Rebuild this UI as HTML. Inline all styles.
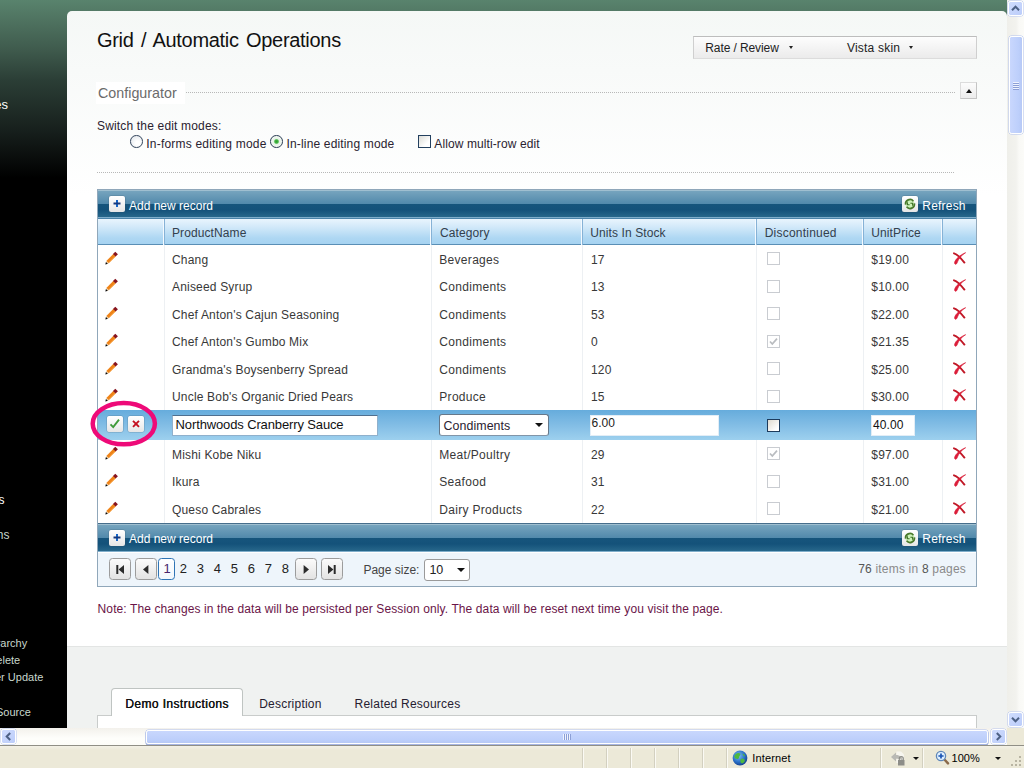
<!DOCTYPE html>
<html><head><meta charset="utf-8"><title>Grid / Automatic Operations</title>
<style>
*{box-sizing:border-box}
html,body{margin:0;padding:0}
body{width:1024px;height:768px;overflow:hidden;position:relative;background:#000;font-family:"Liberation Sans",sans-serif;font-size:12px;color:#333}
.abs{position:absolute}
#bg{left:0;top:0;width:1007px;height:728px;background:linear-gradient(to bottom,#59836d 0,#405c4e 48px,#2b3e36 80px,#18211e 128px,#000 178px)}
#panel{left:67px;top:11px;width:940px;height:717px;border-radius:5px 5px 0 0;background:linear-gradient(to bottom,#f5f8f6 0,#f8faf9 60px,#ffffff 185px)}
#lower{left:67px;top:646px;width:940px;height:82px;background:#f0f2f1;border-top:1px solid #e3e5e4}
#menu{left:693px;top:36px;width:284px;height:23px;border:1px solid #cfcfcf;border-top-color:#bdbdbd;border-bottom-color:#dcdcdc;background:linear-gradient(#fdfdfd,#ebebeb)}
.tri{position:absolute;width:0;height:0;border-left:2px solid transparent;border-right:2px solid transparent;border-top:3px solid #222}
.dot{position:absolute;height:1px;background-image:linear-gradient(to right,#b8b8b8 1px,transparent 1px);background-size:2px 1px}
#grid{left:97px;top:189px;width:880px;height:398px;border:1px solid #90a7ba;background:#fff}
.cmd{position:absolute;left:0;width:878px;height:28px;background:linear-gradient(to bottom,#9fbfd0 0,#9fbfd0 1px,#76a4be 1px,#5189ab 14px,#16557c 14px,#14527a 20px,#27678b 27px,#80aecb 27px,#80aecb 28px)}
.hdr{position:absolute;left:0;top:29px;width:878px;height:26px;background:linear-gradient(to bottom,#e9f5fd 0,#d2e9f9 8px,#aed7f3 19px,#a6d3f1 100%);border-bottom:1px solid #5a8fb6}
.hs{position:absolute;top:29px;height:26px;width:2px;border-left:1px solid #f4faff;border-right:1px solid #86b2d6}
.cs{position:absolute;top:55px;width:1px;background:#edf0f3}
.btn16{position:absolute;width:16px;height:16px;border-radius:2px;background:linear-gradient(#ffffff,#f1f1f1 60%,#e6e6e6);box-shadow:0 0 0 0.5px rgba(60,80,100,.35)}
.edit{position:absolute;left:0;width:878px;top:220px;height:30px;background:linear-gradient(to bottom,#66acdc 0,#82bde5 50%,#9dd0ee 100%)}
.tb{position:absolute;background:#fff;height:20px;top:226px;border:1px solid #dfe9f1;font-size:12px}
.cb{position:absolute;width:13px;height:13px;border:1px solid #c9ccd1;background:#fff}
.pb{position:absolute;top:369px;width:22px;height:22px;border:1px solid #9c9c9c;border-radius:3px;background:linear-gradient(#fafafa,#e2e2e2)}
#status{left:0;top:745px;width:1024px;height:23px;background:linear-gradient(#f3f1e6 0,#ece9d8 4px,#ece9d8 100%);border-top:1px solid #908f86}
.sep{position:absolute;top:748px;height:20px;width:2px;border-left:1px solid #d3d0c0;border-right:1px solid #fbfaf4}
</style></head><body>

<div class="abs" id="bg"></div>
<span style="position:absolute;top:97.35px;font-size:13px;line-height:15px;color:#fff;white-space:nowrap;right:1016.00px;">es</span>
<span style="position:absolute;top:493.19px;font-size:12px;line-height:14px;color:#fff;white-space:nowrap;right:1019.50px;">s</span>
<span style="position:absolute;top:528.19px;font-size:12px;line-height:14px;color:#c9d8cd;white-space:nowrap;right:1014.50px;">ns</span>
<span style="position:absolute;top:637.04px;font-size:11px;line-height:13px;color:#c8d7cd;white-space:nowrap;right:996.80px;">Hierarchy</span>
<span style="position:absolute;top:653.64px;font-size:11px;line-height:13px;color:#c8d7cd;white-space:nowrap;right:1003.80px;">Delete</span>
<span style="position:absolute;top:671.04px;font-size:11px;line-height:13px;color:#c8d7cd;white-space:nowrap;right:980.70px;">After Update</span>
<span style="position:absolute;top:706.04px;font-size:11px;line-height:13px;color:#c8d7cd;white-space:nowrap;right:993.20px;">Source</span>
<div class="abs" id="panel"></div>
<div class="abs" id="lower"></div>
<span style="position:absolute;top:29.02px;font-size:20px;line-height:22px;color:#111;white-space:nowrap;left:97.00px;letter-spacing:-0.3px;word-spacing:2.1px;">Grid / Automatic Operations</span>
<div class="abs" id="menu"></div>
<span style="position:absolute;top:40.59px;font-size:12px;line-height:14px;color:#222;white-space:nowrap;left:705.30px;letter-spacing:-0.1px;">Rate / Review</span>
<i class="tri" style="left:788.5px;top:45.5px"></i>
<span style="position:absolute;top:40.59px;font-size:12px;line-height:14px;color:#222;white-space:nowrap;left:847.00px;letter-spacing:0.2px;">Vista skin</span>
<i class="tri" style="left:908.5px;top:45.5px"></i>
<div class="dot" style="left:186px;top:92px;width:770px"></div>
<div class="abs" style="left:96px;top:82px;width:89px;height:22px;background:#fff"></div>
<span style="position:absolute;top:85.45px;font-size:14.3px;line-height:16.3px;color:#6b6b6b;white-space:nowrap;left:98.00px;">Configurator</span>
<div class="abs" style="left:960px;top:82px;width:17px;height:17px;border:1px solid #c4c4c4;border-top-color:#dcdcdc;border-left-color:#dcdcdc;background:linear-gradient(#fcfcfc,#ececec)"><i style="position:absolute;left:4.5px;top:5.5px;width:0;height:0;border-left:3px solid transparent;border-right:3px solid transparent;border-bottom:4px solid #111"></i></div>
<span style="position:absolute;top:118.99px;font-size:12px;line-height:14px;color:#2a2230;white-space:nowrap;left:97.00px;letter-spacing:0.17px;">Switch the edit modes:</span>
<div class="abs" style="left:130px;top:135px;width:12.5px;height:12.5px;border-radius:50%;border:1px solid #35475e;background:radial-gradient(circle at 60% 65%,#fff 20%,#dde3e9 100%)"></div>
<span style="position:absolute;top:136.99px;font-size:12px;line-height:14px;color:#2a2230;white-space:nowrap;left:146.30px;letter-spacing:0.2px;">In-forms editing mode</span>
<div class="abs" style="left:270px;top:135px;width:12.5px;height:12.5px;border-radius:50%;border:1px solid #2c3e55;background:radial-gradient(circle at 50% 50%,#2f9f2f 0,#43b543 1.7px,#e6f2e6 2.9px,#fff 100%)"></div>
<span style="position:absolute;top:136.99px;font-size:12px;line-height:14px;color:#2a2230;white-space:nowrap;left:286.50px;letter-spacing:0.16px;">In-line editing mode</span>
<div class="abs" style="left:418px;top:135px;width:13px;height:13px;border:1px solid #23405f;background:linear-gradient(135deg,#dcdcd6,#fff 70%)"></div>
<span style="position:absolute;top:136.99px;font-size:12px;line-height:14px;color:#2a2230;white-space:nowrap;left:434.30px;letter-spacing:0.1px;">Allow multi-row edit</span>
<div class="dot" style="left:97px;top:172px;width:858px"></div>
<div class="abs" id="grid">
<div class="cmd" style="top:0"></div><div class="abs" style="left:0;top:28px;width:878px;height:1px;background:#4b84aa"></div>
<div class="hdr"></div>
<div class="hs" style="left:65px"></div>
<div class="cs" style="left:66px;height:278px"></div>
<div class="hs" style="left:332px"></div>
<div class="cs" style="left:333px;height:278px"></div>
<div class="hs" style="left:483px"></div>
<div class="cs" style="left:484px;height:278px"></div>
<div class="hs" style="left:657px"></div>
<div class="cs" style="left:658px;height:278px"></div>
<div class="hs" style="left:764px"></div>
<div class="cs" style="left:765px;height:278px"></div>
<div class="hs" style="left:843px"></div>
<div class="cs" style="left:844px;height:278px"></div>
<div class="edit"></div>
<div class="abs" style="left:0;top:333px;width:878px;height:1px;background:#466e8c"></div><div class="cmd" style="top:334px"></div>
<div class="abs" style="left:0;top:362px;width:878px;height:34px;background:#eef5fb;border-top:1px solid #fff"></div>
</div>
<div class="btn16" style="left:109px;top:196px"><svg width="16" height="16" style="position:absolute;left:0;top:0"><rect x="7" y="4" width="2" height="7" fill="#1565c8"/><rect x="4.5" y="6.5" width="7" height="2" fill="#17387c"/></svg></div>
<span style="position:absolute;top:198.99px;font-size:12px;line-height:14px;color:#fff;white-space:nowrap;left:129.00px;">Add new record</span>
<div class="btn16" style="left:902px;top:196px"><svg width="16" height="16" style="position:absolute;left:0;top:0"><circle cx="8" cy="8" r="4.6" fill="#cdf2b8"/><path d="M3.6 8.6 A4.4 4.4 0 0 1 11.4 5.2" fill="none" stroke="#4a7a2c" stroke-width="1.7"/><path d="M12.4 7.4 A4.4 4.4 0 0 1 4.6 10.8" fill="none" stroke="#4a7a2c" stroke-width="1.7"/><path d="M5.4 6.2 L5.4 8.8 L7.6 8.8 M10.6 9.8 L10.6 7.2 L8.4 7.2" fill="none" stroke="#3f6f25" stroke-width="1.1"/></svg></div>
<span style="position:absolute;top:198.99px;font-size:12px;line-height:14px;color:#fff;white-space:nowrap;left:922.30px;letter-spacing:0.2px;">Refresh</span>
<div class="btn16" style="left:109px;top:530px"><svg width="16" height="16" style="position:absolute;left:0;top:0"><rect x="7" y="4" width="2" height="7" fill="#1565c8"/><rect x="4.5" y="6.5" width="7" height="2" fill="#17387c"/></svg></div>
<span style="position:absolute;top:532.19px;font-size:12px;line-height:14px;color:#fff;white-space:nowrap;left:129.00px;">Add new record</span>
<div class="btn16" style="left:902px;top:530px"><svg width="16" height="16" style="position:absolute;left:0;top:0"><circle cx="8" cy="8" r="4.6" fill="#cdf2b8"/><path d="M3.6 8.6 A4.4 4.4 0 0 1 11.4 5.2" fill="none" stroke="#4a7a2c" stroke-width="1.7"/><path d="M12.4 7.4 A4.4 4.4 0 0 1 4.6 10.8" fill="none" stroke="#4a7a2c" stroke-width="1.7"/><path d="M5.4 6.2 L5.4 8.8 L7.6 8.8 M10.6 9.8 L10.6 7.2 L8.4 7.2" fill="none" stroke="#3f6f25" stroke-width="1.1"/></svg></div>
<span style="position:absolute;top:532.19px;font-size:12px;line-height:14px;color:#fff;white-space:nowrap;left:922.30px;letter-spacing:0.2px;">Refresh</span>
<span style="position:absolute;top:226.19px;font-size:12px;line-height:14px;color:#33404d;white-space:nowrap;left:172.00px;letter-spacing:0.1px;">ProductName</span>
<span style="position:absolute;top:226.19px;font-size:12px;line-height:14px;color:#33404d;white-space:nowrap;left:440.00px;letter-spacing:0.1px;">Category</span>
<span style="position:absolute;top:226.19px;font-size:12px;line-height:14px;color:#33404d;white-space:nowrap;left:590.30px;letter-spacing:0.1px;">Units In Stock</span>
<span style="position:absolute;top:226.19px;font-size:12px;line-height:14px;color:#33404d;white-space:nowrap;left:764.70px;letter-spacing:0.22px;">Discontinued</span>
<span style="position:absolute;top:226.19px;font-size:12px;line-height:14px;color:#33404d;white-space:nowrap;left:871.30px;letter-spacing:0.1px;">UnitPrice</span>
<svg class="abs" style="left:105.2px;top:251.4px" width="14" height="14" viewBox="0 0 14 14"><path d="M2.5 11.1 L9.6 4.0" stroke="#ef8318" stroke-width="3.3" stroke-linecap="butt"/><path d="M3.9 11.6 L10.2 5.3" stroke="#f6a648" stroke-width="0.9"/><path d="M9.3 4.3 L11.6 2.0" stroke="#86141f" stroke-width="3.7" stroke-linecap="butt"/><path d="M0.3 13.5 L1.0 10.7 L3.1 12.8 Z" fill="#0a0a0a"/><path d="M1.1 10.9 L1.7 10.3 L3.6 12.1 L2.9 12.7 Z" fill="#f0cfa0"/></svg>
<span style="position:absolute;top:253.19px;font-size:12px;line-height:14px;color:#383838;white-space:nowrap;left:172.00px;letter-spacing:0.18px;">Chang</span>
<span style="position:absolute;top:253.19px;font-size:12px;line-height:14px;color:#383838;white-space:nowrap;left:439.30px;letter-spacing:0.3px;">Beverages</span>
<span style="position:absolute;top:253.19px;font-size:12px;line-height:14px;color:#383838;white-space:nowrap;left:591.00px;letter-spacing:0.18px;">17</span>
<div class="cb" style="left:767px;top:252.0px"></div>
<span style="position:absolute;top:253.19px;font-size:12px;line-height:14px;color:#383838;white-space:nowrap;left:871.30px;letter-spacing:0.18px;">$19.00</span>
<svg class="abs" style="left:952.6px;top:251.6px" width="14" height="14" viewBox="0 0 14 14"><path d="M1.0 1.3 C4 2.2 8 6.2 11.4 10.6" stroke="#c01826" stroke-width="1.9" fill="none" stroke-linecap="round"/><path d="M12.6 0.7 C9 2.8 5.6 6.3 3.9 11.2 C3.3 12.9 1.2 12.4 1.6 10.4 C2.4 7.0 7.3 2.8 12.6 0.7 Z" fill="#dc1c3a" stroke="#d81e38" stroke-width="0.7"/></svg>
<svg class="abs" style="left:105.2px;top:278.4px" width="14" height="14" viewBox="0 0 14 14"><path d="M2.5 11.1 L9.6 4.0" stroke="#ef8318" stroke-width="3.3" stroke-linecap="butt"/><path d="M3.9 11.6 L10.2 5.3" stroke="#f6a648" stroke-width="0.9"/><path d="M9.3 4.3 L11.6 2.0" stroke="#86141f" stroke-width="3.7" stroke-linecap="butt"/><path d="M0.3 13.5 L1.0 10.7 L3.1 12.8 Z" fill="#0a0a0a"/><path d="M1.1 10.9 L1.7 10.3 L3.6 12.1 L2.9 12.7 Z" fill="#f0cfa0"/></svg>
<span style="position:absolute;top:280.19px;font-size:12px;line-height:14px;color:#383838;white-space:nowrap;left:172.00px;letter-spacing:0.18px;">Aniseed Syrup</span>
<span style="position:absolute;top:280.19px;font-size:12px;line-height:14px;color:#383838;white-space:nowrap;left:439.30px;letter-spacing:0.3px;">Condiments</span>
<span style="position:absolute;top:280.19px;font-size:12px;line-height:14px;color:#383838;white-space:nowrap;left:591.00px;letter-spacing:0.18px;">13</span>
<div class="cb" style="left:767px;top:280.0px"></div>
<span style="position:absolute;top:280.19px;font-size:12px;line-height:14px;color:#383838;white-space:nowrap;left:871.30px;letter-spacing:0.18px;">$10.00</span>
<svg class="abs" style="left:952.6px;top:278.6px" width="14" height="14" viewBox="0 0 14 14"><path d="M1.0 1.3 C4 2.2 8 6.2 11.4 10.6" stroke="#c01826" stroke-width="1.9" fill="none" stroke-linecap="round"/><path d="M12.6 0.7 C9 2.8 5.6 6.3 3.9 11.2 C3.3 12.9 1.2 12.4 1.6 10.4 C2.4 7.0 7.3 2.8 12.6 0.7 Z" fill="#dc1c3a" stroke="#d81e38" stroke-width="0.7"/></svg>
<svg class="abs" style="left:105.2px;top:306.4px" width="14" height="14" viewBox="0 0 14 14"><path d="M2.5 11.1 L9.6 4.0" stroke="#ef8318" stroke-width="3.3" stroke-linecap="butt"/><path d="M3.9 11.6 L10.2 5.3" stroke="#f6a648" stroke-width="0.9"/><path d="M9.3 4.3 L11.6 2.0" stroke="#86141f" stroke-width="3.7" stroke-linecap="butt"/><path d="M0.3 13.5 L1.0 10.7 L3.1 12.8 Z" fill="#0a0a0a"/><path d="M1.1 10.9 L1.7 10.3 L3.6 12.1 L2.9 12.7 Z" fill="#f0cfa0"/></svg>
<span style="position:absolute;top:308.19px;font-size:12px;line-height:14px;color:#383838;white-space:nowrap;left:172.00px;letter-spacing:0.18px;">Chef Anton's Cajun Seasoning</span>
<span style="position:absolute;top:308.19px;font-size:12px;line-height:14px;color:#383838;white-space:nowrap;left:439.30px;letter-spacing:0.3px;">Condiments</span>
<span style="position:absolute;top:308.19px;font-size:12px;line-height:14px;color:#383838;white-space:nowrap;left:591.00px;letter-spacing:0.18px;">53</span>
<div class="cb" style="left:767px;top:307.0px"></div>
<span style="position:absolute;top:308.19px;font-size:12px;line-height:14px;color:#383838;white-space:nowrap;left:871.30px;letter-spacing:0.18px;">$22.00</span>
<svg class="abs" style="left:952.6px;top:306.6px" width="14" height="14" viewBox="0 0 14 14"><path d="M1.0 1.3 C4 2.2 8 6.2 11.4 10.6" stroke="#c01826" stroke-width="1.9" fill="none" stroke-linecap="round"/><path d="M12.6 0.7 C9 2.8 5.6 6.3 3.9 11.2 C3.3 12.9 1.2 12.4 1.6 10.4 C2.4 7.0 7.3 2.8 12.6 0.7 Z" fill="#dc1c3a" stroke="#d81e38" stroke-width="0.7"/></svg>
<svg class="abs" style="left:105.2px;top:333.4px" width="14" height="14" viewBox="0 0 14 14"><path d="M2.5 11.1 L9.6 4.0" stroke="#ef8318" stroke-width="3.3" stroke-linecap="butt"/><path d="M3.9 11.6 L10.2 5.3" stroke="#f6a648" stroke-width="0.9"/><path d="M9.3 4.3 L11.6 2.0" stroke="#86141f" stroke-width="3.7" stroke-linecap="butt"/><path d="M0.3 13.5 L1.0 10.7 L3.1 12.8 Z" fill="#0a0a0a"/><path d="M1.1 10.9 L1.7 10.3 L3.6 12.1 L2.9 12.7 Z" fill="#f0cfa0"/></svg>
<span style="position:absolute;top:335.19px;font-size:12px;line-height:14px;color:#383838;white-space:nowrap;left:172.00px;letter-spacing:0.18px;">Chef Anton's Gumbo Mix</span>
<span style="position:absolute;top:335.19px;font-size:12px;line-height:14px;color:#383838;white-space:nowrap;left:439.30px;letter-spacing:0.3px;">Condiments</span>
<span style="position:absolute;top:335.19px;font-size:12px;line-height:14px;color:#383838;white-space:nowrap;left:591.00px;letter-spacing:0.18px;">0</span>
<div class="cb" style="left:767px;top:335.0px"></div>
<svg class="abs" style="left:767px;top:335px" width="13" height="13"><path d="M3 6.5 L5.3 9 L10 3.6" stroke="#b9bcc0" stroke-width="1.7" fill="none"/></svg>
<span style="position:absolute;top:335.19px;font-size:12px;line-height:14px;color:#383838;white-space:nowrap;left:871.30px;letter-spacing:0.18px;">$21.35</span>
<svg class="abs" style="left:952.6px;top:333.6px" width="14" height="14" viewBox="0 0 14 14"><path d="M1.0 1.3 C4 2.2 8 6.2 11.4 10.6" stroke="#c01826" stroke-width="1.9" fill="none" stroke-linecap="round"/><path d="M12.6 0.7 C9 2.8 5.6 6.3 3.9 11.2 C3.3 12.9 1.2 12.4 1.6 10.4 C2.4 7.0 7.3 2.8 12.6 0.7 Z" fill="#dc1c3a" stroke="#d81e38" stroke-width="0.7"/></svg>
<svg class="abs" style="left:105.2px;top:361.4px" width="14" height="14" viewBox="0 0 14 14"><path d="M2.5 11.1 L9.6 4.0" stroke="#ef8318" stroke-width="3.3" stroke-linecap="butt"/><path d="M3.9 11.6 L10.2 5.3" stroke="#f6a648" stroke-width="0.9"/><path d="M9.3 4.3 L11.6 2.0" stroke="#86141f" stroke-width="3.7" stroke-linecap="butt"/><path d="M0.3 13.5 L1.0 10.7 L3.1 12.8 Z" fill="#0a0a0a"/><path d="M1.1 10.9 L1.7 10.3 L3.6 12.1 L2.9 12.7 Z" fill="#f0cfa0"/></svg>
<span style="position:absolute;top:363.19px;font-size:12px;line-height:14px;color:#383838;white-space:nowrap;left:172.00px;letter-spacing:0.18px;">Grandma's Boysenberry Spread</span>
<span style="position:absolute;top:363.19px;font-size:12px;line-height:14px;color:#383838;white-space:nowrap;left:439.30px;letter-spacing:0.3px;">Condiments</span>
<span style="position:absolute;top:363.19px;font-size:12px;line-height:14px;color:#383838;white-space:nowrap;left:591.00px;letter-spacing:0.18px;">120</span>
<div class="cb" style="left:767px;top:362.0px"></div>
<span style="position:absolute;top:363.19px;font-size:12px;line-height:14px;color:#383838;white-space:nowrap;left:871.30px;letter-spacing:0.18px;">$25.00</span>
<svg class="abs" style="left:952.6px;top:361.6px" width="14" height="14" viewBox="0 0 14 14"><path d="M1.0 1.3 C4 2.2 8 6.2 11.4 10.6" stroke="#c01826" stroke-width="1.9" fill="none" stroke-linecap="round"/><path d="M12.6 0.7 C9 2.8 5.6 6.3 3.9 11.2 C3.3 12.9 1.2 12.4 1.6 10.4 C2.4 7.0 7.3 2.8 12.6 0.7 Z" fill="#dc1c3a" stroke="#d81e38" stroke-width="0.7"/></svg>
<svg class="abs" style="left:105.2px;top:388.4px" width="14" height="14" viewBox="0 0 14 14"><path d="M2.5 11.1 L9.6 4.0" stroke="#ef8318" stroke-width="3.3" stroke-linecap="butt"/><path d="M3.9 11.6 L10.2 5.3" stroke="#f6a648" stroke-width="0.9"/><path d="M9.3 4.3 L11.6 2.0" stroke="#86141f" stroke-width="3.7" stroke-linecap="butt"/><path d="M0.3 13.5 L1.0 10.7 L3.1 12.8 Z" fill="#0a0a0a"/><path d="M1.1 10.9 L1.7 10.3 L3.6 12.1 L2.9 12.7 Z" fill="#f0cfa0"/></svg>
<span style="position:absolute;top:390.19px;font-size:12px;line-height:14px;color:#383838;white-space:nowrap;left:172.00px;letter-spacing:0.18px;">Uncle Bob's Organic Dried Pears</span>
<span style="position:absolute;top:390.19px;font-size:12px;line-height:14px;color:#383838;white-space:nowrap;left:439.30px;letter-spacing:0.3px;">Produce</span>
<span style="position:absolute;top:390.19px;font-size:12px;line-height:14px;color:#383838;white-space:nowrap;left:591.00px;letter-spacing:0.18px;">15</span>
<div class="cb" style="left:767px;top:390.0px"></div>
<span style="position:absolute;top:390.19px;font-size:12px;line-height:14px;color:#383838;white-space:nowrap;left:871.30px;letter-spacing:0.18px;">$30.00</span>
<svg class="abs" style="left:952.6px;top:388.6px" width="14" height="14" viewBox="0 0 14 14"><path d="M1.0 1.3 C4 2.2 8 6.2 11.4 10.6" stroke="#c01826" stroke-width="1.9" fill="none" stroke-linecap="round"/><path d="M12.6 0.7 C9 2.8 5.6 6.3 3.9 11.2 C3.3 12.9 1.2 12.4 1.6 10.4 C2.4 7.0 7.3 2.8 12.6 0.7 Z" fill="#dc1c3a" stroke="#d81e38" stroke-width="0.7"/></svg>
<svg class="abs" style="left:105.2px;top:446.4px" width="14" height="14" viewBox="0 0 14 14"><path d="M2.5 11.1 L9.6 4.0" stroke="#ef8318" stroke-width="3.3" stroke-linecap="butt"/><path d="M3.9 11.6 L10.2 5.3" stroke="#f6a648" stroke-width="0.9"/><path d="M9.3 4.3 L11.6 2.0" stroke="#86141f" stroke-width="3.7" stroke-linecap="butt"/><path d="M0.3 13.5 L1.0 10.7 L3.1 12.8 Z" fill="#0a0a0a"/><path d="M1.1 10.9 L1.7 10.3 L3.6 12.1 L2.9 12.7 Z" fill="#f0cfa0"/></svg>
<span style="position:absolute;top:448.19px;font-size:12px;line-height:14px;color:#383838;white-space:nowrap;left:172.00px;letter-spacing:0.18px;">Mishi Kobe Niku</span>
<span style="position:absolute;top:448.19px;font-size:12px;line-height:14px;color:#383838;white-space:nowrap;left:439.30px;letter-spacing:0.3px;">Meat/Poultry</span>
<span style="position:absolute;top:448.19px;font-size:12px;line-height:14px;color:#383838;white-space:nowrap;left:591.00px;letter-spacing:0.18px;">29</span>
<div class="cb" style="left:767px;top:447.0px"></div>
<svg class="abs" style="left:767px;top:447px" width="13" height="13"><path d="M3 6.5 L5.3 9 L10 3.6" stroke="#b9bcc0" stroke-width="1.7" fill="none"/></svg>
<span style="position:absolute;top:448.19px;font-size:12px;line-height:14px;color:#383838;white-space:nowrap;left:871.30px;letter-spacing:0.18px;">$97.00</span>
<svg class="abs" style="left:952.6px;top:446.6px" width="14" height="14" viewBox="0 0 14 14"><path d="M1.0 1.3 C4 2.2 8 6.2 11.4 10.6" stroke="#c01826" stroke-width="1.9" fill="none" stroke-linecap="round"/><path d="M12.6 0.7 C9 2.8 5.6 6.3 3.9 11.2 C3.3 12.9 1.2 12.4 1.6 10.4 C2.4 7.0 7.3 2.8 12.6 0.7 Z" fill="#dc1c3a" stroke="#d81e38" stroke-width="0.7"/></svg>
<svg class="abs" style="left:105.2px;top:473.4px" width="14" height="14" viewBox="0 0 14 14"><path d="M2.5 11.1 L9.6 4.0" stroke="#ef8318" stroke-width="3.3" stroke-linecap="butt"/><path d="M3.9 11.6 L10.2 5.3" stroke="#f6a648" stroke-width="0.9"/><path d="M9.3 4.3 L11.6 2.0" stroke="#86141f" stroke-width="3.7" stroke-linecap="butt"/><path d="M0.3 13.5 L1.0 10.7 L3.1 12.8 Z" fill="#0a0a0a"/><path d="M1.1 10.9 L1.7 10.3 L3.6 12.1 L2.9 12.7 Z" fill="#f0cfa0"/></svg>
<span style="position:absolute;top:475.19px;font-size:12px;line-height:14px;color:#383838;white-space:nowrap;left:172.00px;letter-spacing:0.18px;">Ikura</span>
<span style="position:absolute;top:475.19px;font-size:12px;line-height:14px;color:#383838;white-space:nowrap;left:439.30px;letter-spacing:0.3px;">Seafood</span>
<span style="position:absolute;top:475.19px;font-size:12px;line-height:14px;color:#383838;white-space:nowrap;left:591.00px;letter-spacing:0.18px;">31</span>
<div class="cb" style="left:767px;top:475.0px"></div>
<span style="position:absolute;top:475.19px;font-size:12px;line-height:14px;color:#383838;white-space:nowrap;left:871.30px;letter-spacing:0.18px;">$31.00</span>
<svg class="abs" style="left:952.6px;top:473.6px" width="14" height="14" viewBox="0 0 14 14"><path d="M1.0 1.3 C4 2.2 8 6.2 11.4 10.6" stroke="#c01826" stroke-width="1.9" fill="none" stroke-linecap="round"/><path d="M12.6 0.7 C9 2.8 5.6 6.3 3.9 11.2 C3.3 12.9 1.2 12.4 1.6 10.4 C2.4 7.0 7.3 2.8 12.6 0.7 Z" fill="#dc1c3a" stroke="#d81e38" stroke-width="0.7"/></svg>
<svg class="abs" style="left:105.2px;top:501.4px" width="14" height="14" viewBox="0 0 14 14"><path d="M2.5 11.1 L9.6 4.0" stroke="#ef8318" stroke-width="3.3" stroke-linecap="butt"/><path d="M3.9 11.6 L10.2 5.3" stroke="#f6a648" stroke-width="0.9"/><path d="M9.3 4.3 L11.6 2.0" stroke="#86141f" stroke-width="3.7" stroke-linecap="butt"/><path d="M0.3 13.5 L1.0 10.7 L3.1 12.8 Z" fill="#0a0a0a"/><path d="M1.1 10.9 L1.7 10.3 L3.6 12.1 L2.9 12.7 Z" fill="#f0cfa0"/></svg>
<span style="position:absolute;top:503.19px;font-size:12px;line-height:14px;color:#383838;white-space:nowrap;left:172.00px;letter-spacing:0.18px;">Queso Cabrales</span>
<span style="position:absolute;top:503.19px;font-size:12px;line-height:14px;color:#383838;white-space:nowrap;left:439.30px;letter-spacing:0.3px;">Dairy Products</span>
<span style="position:absolute;top:503.19px;font-size:12px;line-height:14px;color:#383838;white-space:nowrap;left:591.00px;letter-spacing:0.18px;">22</span>
<div class="cb" style="left:767px;top:502.0px"></div>
<span style="position:absolute;top:503.19px;font-size:12px;line-height:14px;color:#383838;white-space:nowrap;left:871.30px;letter-spacing:0.18px;">$21.00</span>
<svg class="abs" style="left:952.6px;top:501.6px" width="14" height="14" viewBox="0 0 14 14"><path d="M1.0 1.3 C4 2.2 8 6.2 11.4 10.6" stroke="#c01826" stroke-width="1.9" fill="none" stroke-linecap="round"/><path d="M12.6 0.7 C9 2.8 5.6 6.3 3.9 11.2 C3.3 12.9 1.2 12.4 1.6 10.4 C2.4 7.0 7.3 2.8 12.6 0.7 Z" fill="#dc1c3a" stroke="#d81e38" stroke-width="0.7"/></svg>
<div class="btn16" style="left:107px;top:416px"><svg width="16" height="16" style="position:absolute;left:0;top:0"><path d="M3.5 8.4 L6.2 11.1 L12.0 3.7" stroke="#3f9a3a" stroke-width="1.9" fill="none"/></svg></div>
<div class="btn16" style="left:128px;top:416px"><svg width="16" height="16" style="position:absolute;left:0;top:0"><path d="M5.0 4.8 L11.0 10.8 M11.0 4.8 L5.0 10.8" stroke="#c41020" stroke-width="1.9" fill="none"/></svg></div>
<div class="abs" style="left:172px;top:415px;width:206px;height:21px;background:#fff;border:1px solid #8fb0cc;border-top-color:#4f6f8f"></div>
<span style="position:absolute;top:417.25px;font-size:13px;line-height:15px;color:#111;white-space:nowrap;left:175.60px;letter-spacing:-0.13px;">Northwoods Cranberry Sauce</span>
<div class="abs" style="left:439px;top:414px;width:110px;height:22px;background:#fff;border:1px solid #66788a;border-bottom-color:#8195a8;border-radius:3px"><i style="position:absolute;left:95px;top:8px;width:0;height:0;border-left:4px solid transparent;border-right:4px solid transparent;border-top:4.5px solid #111"></i></div>
<span style="position:absolute;top:418.75px;font-size:12.4px;line-height:14.4px;color:#2a2230;white-space:nowrap;left:443.60px;letter-spacing:0.06px;">Condiments</span>
<div class="abs" style="left:590px;top:415px;width:129px;height:21px;background:#fff;border:1px solid #e2edf6"></div>
<span style="position:absolute;top:415.89px;font-size:12px;line-height:14px;color:#222;white-space:nowrap;left:591.60px;">6.00</span>
<div class="abs" style="left:767px;top:419px;width:13px;height:13px;border:1px solid #1d3b5c;background:linear-gradient(135deg,#e0dbd0,#fff 80%)"></div>
<div class="abs" style="left:871px;top:415px;width:44px;height:21px;background:#fff;border:1px solid #e2edf6"></div>
<span style="position:absolute;top:417.99px;font-size:12px;line-height:14px;color:#111;white-space:nowrap;left:873.00px;letter-spacing:0.1px;">40.00</span>
<svg class="abs" style="left:84px;top:394px" width="80" height="60"><ellipse cx="39.8" cy="29.7" rx="31.1" ry="20.6" fill="none" stroke="#ee0a78" stroke-width="4.5"/></svg>
<div class="abs" style="left:109px;top:558px;width:22px;height:22px;border:1px solid #9c9c9c;border-radius:3.5px;background:linear-gradient(#fbfbfb,#e3e3e3)"><svg width="20" height="20" style="position:absolute;left:0;top:0"><rect x="6.3" y="6" width="2" height="9" fill="#2b2b2b"/><path d="M14 6 L14 15 L8.6 10.5 Z" fill="#2b2b2b"/></svg></div>
<div class="abs" style="left:135px;top:558px;width:22px;height:22px;border:1px solid #9c9c9c;border-radius:3.5px;background:linear-gradient(#fbfbfb,#e3e3e3)"><svg width="20" height="20" style="position:absolute;left:0;top:0"><path d="M12.4 6 L12.4 15 L7 10.5 Z" fill="#2b2b2b"/></svg></div>
<div class="abs" style="left:158px;top:558px;width:17px;height:22px;border:1px solid #2f74b5;border-radius:3.5px;background:linear-gradient(#fff,#f1f7fc)"></div>
<span style="position:absolute;top:561.35px;font-size:13px;line-height:15px;color:#47246b;white-space:nowrap;left:163.40px;">1</span>
<span style="position:absolute;top:561.35px;font-size:13px;line-height:15px;color:#222;white-space:nowrap;left:179.80px;">2</span>
<span style="position:absolute;top:561.35px;font-size:13px;line-height:15px;color:#222;white-space:nowrap;left:196.80px;">3</span>
<span style="position:absolute;top:561.35px;font-size:13px;line-height:15px;color:#222;white-space:nowrap;left:213.80px;">4</span>
<span style="position:absolute;top:561.35px;font-size:13px;line-height:15px;color:#222;white-space:nowrap;left:230.80px;">5</span>
<span style="position:absolute;top:561.35px;font-size:13px;line-height:15px;color:#222;white-space:nowrap;left:247.80px;">6</span>
<span style="position:absolute;top:561.35px;font-size:13px;line-height:15px;color:#222;white-space:nowrap;left:264.80px;">7</span>
<span style="position:absolute;top:561.35px;font-size:13px;line-height:15px;color:#222;white-space:nowrap;left:281.80px;">8</span>
<div class="abs" style="left:295px;top:558px;width:22px;height:22px;border:1px solid #9c9c9c;border-radius:3.5px;background:linear-gradient(#fbfbfb,#e3e3e3)"><svg width="20" height="20" style="position:absolute;left:0;top:0"><path d="M7.6 6 L7.6 15 L13 10.5 Z" fill="#2b2b2b"/></svg></div>
<div class="abs" style="left:321px;top:558px;width:22px;height:22px;border:1px solid #9c9c9c;border-radius:3.5px;background:linear-gradient(#fbfbfb,#e3e3e3)"><svg width="20" height="20" style="position:absolute;left:0;top:0"><path d="M6 6 L6 15 L11.4 10.5 Z" fill="#2b2b2b"/><rect x="11.7" y="6" width="2" height="9" fill="#2b2b2b"/></svg></div>
<span style="position:absolute;top:563.19px;font-size:12px;line-height:14px;color:#444;white-space:nowrap;left:363.40px;">Page size:</span>
<div class="abs" style="left:424px;top:559px;width:46px;height:22px;background:#fff;border:1px solid #9a9a9a;border-radius:3px"><i style="position:absolute;left:32px;top:8px;width:0;height:0;border-left:4px solid transparent;border-right:4px solid transparent;border-top:4.5px solid #111"></i></div>
<span style="position:absolute;top:562.77px;font-size:12.5px;line-height:14.5px;color:#222;white-space:nowrap;left:429.40px;">10</span>
<span style="position:absolute;top:562.19px;font-size:12px;line-height:14px;color:#8a8a8a;white-space:nowrap;right:58.00px;letter-spacing:0.2px;"><span style="color:#555">76</span> items in <span style="color:#555">8</span> pages</span>
<span style="position:absolute;top:602.19px;font-size:12px;line-height:14px;color:#6a1548;white-space:nowrap;left:97.60px;letter-spacing:0.105px;">Note: The changes in the data will be persisted per Session only. The data will be reset next time you visit the page.</span>
<div class="abs" style="left:97px;top:715px;width:880px;height:14px;background:#fff;border:1px solid #c9cccb;border-bottom:none"></div>
<div class="abs" style="left:111px;top:688px;width:132px;height:28px;background:#fff;border:1px solid #bfc4c2;border-bottom:none;border-radius:4px 4px 0 0"></div>
<span style="position:absolute;top:697.19px;font-size:12px;line-height:14px;color:#111;white-space:nowrap;left:125.20px;letter-spacing:0.4px;text-shadow:0.35px 0 0 #111;">Demo Instructions</span>
<span style="position:absolute;top:697.19px;font-size:12px;line-height:14px;color:#262030;white-space:nowrap;left:259.20px;letter-spacing:0.22px;">Description</span>
<span style="position:absolute;top:697.19px;font-size:12px;line-height:14px;color:#262030;white-space:nowrap;left:354.60px;letter-spacing:0.22px;">Related Resources</span>
<div class="abs" style="left:1007px;top:0;width:17px;height:728px;background:linear-gradient(to right,#efefea 0,#f2f2ee 9px,#f9f9f6 12px,#fbfbf8)"></div>
<div class="abs" style="left:1008px;top:1px;width:15px;height:15px;border-radius:2.5px;border:1px solid #fff;box-shadow:0 0 0 0.5px #b7c6f0;background:linear-gradient(135deg,#cfdcfd,#bccdfa)"><svg width="13" height="13" style="position:absolute;left:0;top:0"><path d="M3 8.2 L6.5 4.7 L10 8.2" stroke="#4d6185" stroke-width="2" fill="none"/></svg></div>
<div class="abs" style="left:1008px;top:712px;width:15px;height:15px;border-radius:2.5px;border:1px solid #fff;box-shadow:0 0 0 0.5px #b7c6f0;background:linear-gradient(135deg,#cfdcfd,#bccdfa)"><svg width="13" height="13" style="position:absolute;left:0;top:0"><path d="M3 4.8 L6.5 8.3 L10 4.8" stroke="#4d6185" stroke-width="2" fill="none"/></svg></div>
<div class="abs" style="left:1009px;top:36px;width:14px;height:98px;border-radius:2.5px;border:1px solid #fff;box-shadow:0 0 0 0.5px #b2c2ee;background:linear-gradient(to right,#c9d7fd,#bdcffb 70%,#b7c9f6)"><div style="position:absolute;left:3px;top:45px;width:6px;height:8px;background:repeating-linear-gradient(to bottom,#eef3fe 0,#eef3fe 1px,#8c9fd6 1px,#8c9fd6 2px)"></div></div>
<div class="abs" style="left:0;top:728px;width:1007px;height:17px;background:linear-gradient(to bottom,#f3f1ec,#fefefb 60%,#fdfdf9)"></div>
<div class="abs" style="left:1007px;top:728px;width:17px;height:17px;background:#ece9d8"></div>
<div class="abs" style="left:1px;top:729px;width:15px;height:15px;border-radius:2.5px;border:1px solid #fff;box-shadow:0 0 0 0.5px #b7c6f0;background:linear-gradient(135deg,#cfdcfd,#bccdfa)"><svg width="13" height="13" style="position:absolute;left:0;top:0"><path d="M8.2 3 L4.7 6.5 L8.2 10" stroke="#4d6185" stroke-width="2" fill="none"/></svg></div>
<div class="abs" style="left:991px;top:729px;width:15px;height:15px;border-radius:2.5px;border:1px solid #fff;box-shadow:0 0 0 0.5px #b7c6f0;background:linear-gradient(135deg,#cfdcfd,#bccdfa)"><svg width="13" height="13" style="position:absolute;left:0;top:0"><path d="M4.8 3 L8.3 6.5 L4.8 10" stroke="#4d6185" stroke-width="2" fill="none"/></svg></div>
<div class="abs" style="left:146px;top:730px;width:842px;height:14px;border-radius:2.5px;border:1px solid #fff;box-shadow:0 0 0 0.5px #b2c2ee,0 1px 0 0.5px #9aa9d6;background:linear-gradient(to bottom,#c9d7fd,#bdcffb 70%,#b7c9f6)"><div style="position:absolute;left:416px;top:3px;width:8px;height:6px;background:repeating-linear-gradient(to right,#eef3fe 0,#eef3fe 1px,#8c9fd6 1px,#8c9fd6 2px)"></div></div>
<div class="abs" id="status"></div>
<div class="sep" style="left:582px"></div>
<div class="sep" style="left:606px"></div>
<div class="sep" style="left:630px"></div>
<div class="sep" style="left:654px"></div>
<div class="sep" style="left:678px"></div>
<div class="sep" style="left:702px"></div>
<div class="sep" style="left:726px"></div>
<div class="sep" style="left:880px"></div>
<div class="sep" style="left:922px"></div>
<svg class="abs" style="left:732px;top:750px" width="16" height="16"><defs><radialGradient id="gl" cx="40%" cy="35%" r="70%"><stop offset="0" stop-color="#7fc0f4"/><stop offset="0.6" stop-color="#2a70c8"/><stop offset="1" stop-color="#123c86"/></radialGradient></defs><circle cx="8" cy="8" r="7.4" fill="url(#gl)"/><path d="M2.2 6.5 C3 3.2 6.5 2 8.3 3.6 C9 5.2 7 6.2 7 7.8 C6.4 9.6 3.4 9.6 2.2 6.5 Z M8.4 9.4 C10.4 7.6 13.6 9 12.6 11.6 C11.4 14 8.6 13.8 8.4 11.6 Z M10.5 3.6 C12 3.8 13.2 5.4 13 6.6 C12 6.6 10.8 5.4 10.5 3.6 Z" fill="#4fb83e"/></svg>
<span style="position:absolute;top:752.24px;font-size:11px;line-height:13px;color:#000;white-space:nowrap;left:752.30px;letter-spacing:0.15px;">Internet</span>
<svg class="abs" style="left:890px;top:751px" width="16" height="16"><path d="M6.5 0.5 L11 0.5 L14 3.5 L14 12 L6.5 12 Z" fill="#f7f6ef"/><path d="M1 6 L6 1.5 L6 4 C10 4 13 6 13 11 C11 8 9 7.8 6 7.8 L6 10.5 Z" fill="#b9b9b4"/><rect x="8" y="9" width="6.5" height="5.5" fill="#8d8d88"/><path d="M9.3 9 V7.6 A2 2 0 0 1 13.3 7.6 V9" stroke="#8d8d88" stroke-width="1.2" fill="none"/></svg>
<i class="tri" style="left:913px;top:756.5px;border-left-width:3px;border-right-width:3px;border-top-width:3.5px;border-top-color:#111"></i>
<svg class="abs" style="left:935px;top:750px" width="16" height="16"><path d="M8.5 8.5 L13 13.4" stroke="#8a6a4a" stroke-width="2.4" stroke-linecap="round"/><circle cx="6" cy="6" r="4.6" fill="#dff0ff" stroke="#5f87b8" stroke-width="1.3"/><path d="M6 3.4 V8.6 M3.4 6 H8.6" stroke="#1c56b4" stroke-width="1.7"/></svg>
<span style="position:absolute;top:752.24px;font-size:11px;line-height:13px;color:#000;white-space:nowrap;left:951.60px;">100%</span>
<i class="tri" style="left:995px;top:756.5px;border-left-width:3px;border-right-width:3px;border-top-width:3.5px;border-top-color:#111"></i>
<svg class="abs" style="left:1010px;top:755px" width="13" height="13"><g fill="#b8b4a2"><rect x="9" y="1" width="2" height="2"/><rect x="5" y="5" width="2" height="2"/><rect x="9" y="5" width="2" height="2"/><rect x="1" y="9" width="2" height="2"/><rect x="5" y="9" width="2" height="2"/><rect x="9" y="9" width="2" height="2"/></g></svg>
</body></html>
